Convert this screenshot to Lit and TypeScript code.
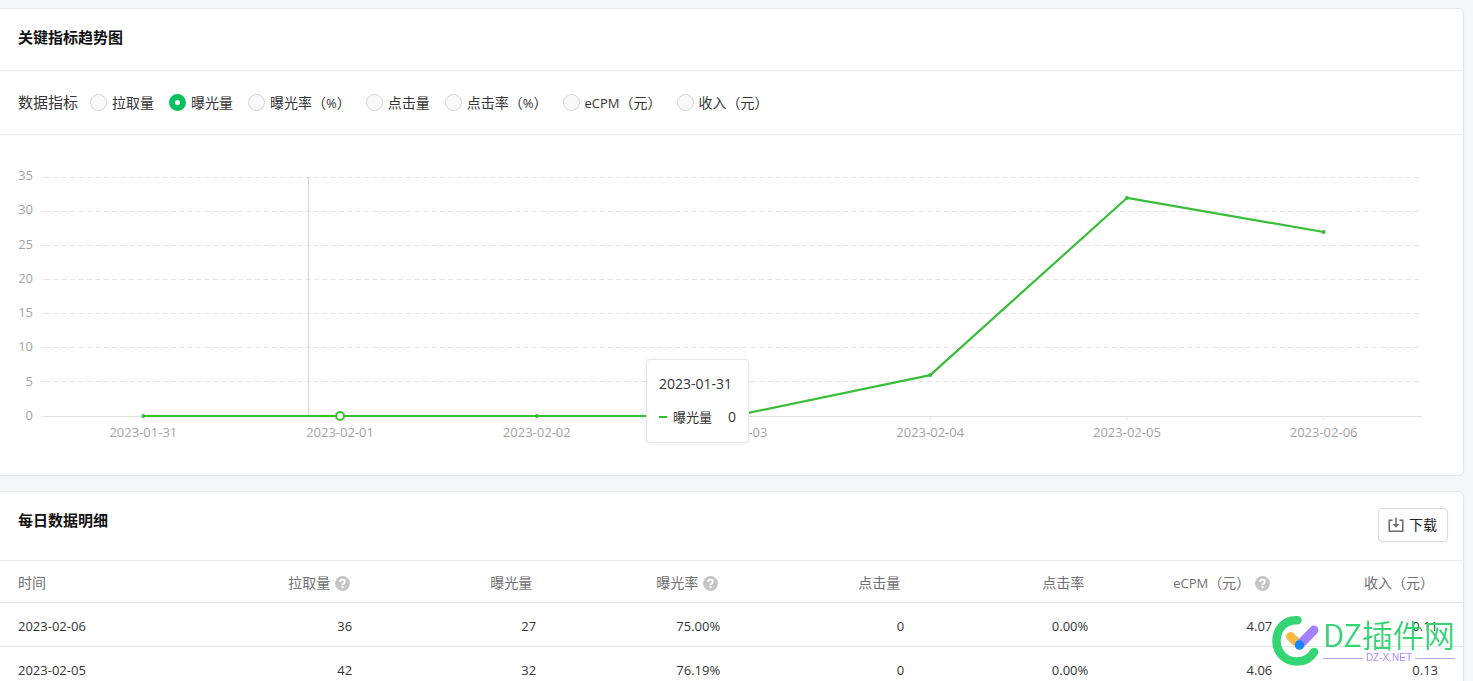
import { LitElement, html, svg, css } from "lit";
import { customElement, property, state } from "lit/decorators.js";
import { styleMap } from "lit/directives/style-map.js";

interface Metric {
  id: string;
  name: string;
  unit?: string;
}

interface Column {
  title: string;
  unit?: string;
  help?: boolean;
  width: string;
}

const METRICS: Metric[] = [
  { id: "pull", name: "拉取量" },
  { id: "exposure", name: "曝光量" },
  { id: "exposure-rate", name: "曝光率", unit: "%" },
  { id: "click", name: "点击量" },
  { id: "click-rate", name: "点击率", unit: "%" },
  { id: "ecpm", name: "eCPM", unit: "元" },
  { id: "income", name: "收入", unit: "元" },
];

const COLUMNS: Column[] = [
  { title: "时间", width: "13.2%" },
  { title: "拉取量", help: true, width: "12.58%" },
  { title: "曝光量", width: "12.58%" },
  { title: "曝光率", help: true, width: "12.58%" },
  { title: "点击量", width: "12.58%" },
  { title: "点击率", width: "12.58%" },
  { title: "eCPM", unit: "元", help: true, width: "12.58%" },
  { title: "收入", unit: "元", width: "11.32%" },
];

const ROWS: string[][] = [
  ["2023-02-06", "36", "27", "75.00%", "0", "0.00%", "4.07", "0.11"],
  ["2023-02-05", "42", "32", "76.19%", "0", "0.00%", "4.06", "0.13"],
];

const POINTS = [
  { date: "2023-01-31", value: 0 },
  { date: "2023-02-01", value: 0 },
  { date: "2023-02-02", value: 0 },
  { date: "2023-02-03", value: 0 },
  { date: "2023-02-04", value: 6 },
  { date: "2023-02-05", value: 32 },
  { date: "2023-02-06", value: 27 },
];

// Latin runs are set one size smaller than the Chinese text around them.
const run = (text: string) =>
  /^[\x20-\x7e]+$/.test(text) ? html`<span class="latin">${text}</span>` : text;

const label = (name: string, unit?: string) =>
  unit ? html`${run(name)}（${run(unit)}）` : run(name);

@customElement("trend-chart")
export class TrendChart extends LitElement {
  @property({ attribute: false }) points = POINTS;
  @property({ type: Number }) active = 1;

  static styles = css`
    :host {
      display: grid;
      grid-template-columns: 15px 1fr;
      column-gap: 12px;
      color: #a4a4a4;
      font-size: 13px;
      line-height: 20px;
    }
    .scale {
      display: flex;
      flex-direction: column;
      justify-content: space-between;
      height: 260px;
      text-align: right;
    }
    .plot {
      position: relative;
    }
    .canvas {
      display: block;
      width: 100%;
      height: 257px;
      overflow: visible;
    }
    .grid {
      stroke: #e4e4e4;
      stroke-dasharray: 5 3.4;
    }
    .stub {
      stroke: #ebebeb;
    }
    .axis {
      stroke: #e0e0e0;
    }
    .pointer {
      stroke: #d4d4d4;
      shape-rendering: crispEdges;
    }
    .series {
      stroke: #38be38;
      stroke-width: 2.2;
      stroke-linecap: round;
    }
    .dot {
      fill: #38be38;
    }
    .ring {
      fill: #fff;
      stroke: #38be38;
      stroke-width: 2;
    }
    .dates {
      display: grid;
      grid-template-columns: repeat(7, 1fr);
      text-align: center;
    }
    .tip {
      position: absolute;
      left: 43.65%;
      top: 194px;
      box-sizing: border-box;
      width: 103px;
      padding: 12px 12px 13px;
      border: 1px solid #e6e7e8;
      border-radius: 4px;
      background: #fff;
      box-shadow: 0 1px 4px rgba(0, 0, 0, 0.08);
      color: #353535;
      font-size: 14px;
      line-height: 24px;
    }
    .tip-row {
      display: flex;
      align-items: center;
      gap: 6px;
      margin-top: 9px;
      font-size: 13px;
    }
    .tip-key {
      width: 8px;
      height: 2px;
      background: #2fc02f;
    }
    .tip-value {
      margin-left: auto;
      font-size: 14px;
    }
  `;

  private x(i: number) {
    return `${((i + 0.5) / this.points.length) * 100}%`;
  }

  private y(v: number) {
    return 251 - (v / 35) * 238.5;
  }

  render() {
    const ticks = [35, 30, 25, 20, 15, 10, 5, 0];
    return html`
      <div class="scale">${ticks.map((t) => html`<span>${t}</span>`)}</div>
      <div class="plot">
        <svg class="canvas" role="img" aria-label="曝光量">
          ${ticks.map((t) => {
            const y = Math.round(this.y(t) - 0.5) + 0.5;
            return svg`
              <line class="stub" x1="-4" x2="2" y1=${y} y2=${y}></line>
              <line class=${t ? "grid" : "axis"} x1="0" x2="100%" y1=${y} y2=${y}></line>`;
          })}
          ${this.points.map(
            (_, i) => svg`<line class="stub" x1=${this.x(i)} x2=${this.x(i)} y1="252" y2="256"></line>`
          )}
          <line class="pointer" x1="19.14%" x2="19.14%" y1="12" y2="251"></line>
          ${this.points.slice(1).map(
            (p, i) => svg`<line class="series"
              x1=${this.x(i)} y1=${this.y(this.points[i].value)}
              x2=${this.x(i + 1)} y2=${this.y(p.value)}></line>`
          )}
          ${this.points.map((p, i) =>
            i === this.active
              ? svg`<circle class="ring" cx=${this.x(i)} cy=${this.y(p.value)} r="4"></circle>`
              : svg`<circle class="dot" cx=${this.x(i)} cy=${this.y(p.value)} r="2"></circle>`
          )}
        </svg>
        <div class="dates">${this.points.map((p) => html`<span>${p.date}</span>`)}</div>
        <div class="tip">
          <div>2023-01-31</div>
          <div class="tip-row">
            <span class="tip-key"></span><span>曝光量</span><span class="tip-value">0</span>
          </div>
        </div>
      </div>
    `;
  }
}

@customElement("app-root")
export class AppRoot extends LitElement {
  @state() private metric = "exposure";

  static styles = css`
    :host {
      display: block;
      box-sizing: border-box;
      height: 100vh;
      overflow: auto;
      scrollbar-width: none;
      padding: 8px 9px 0 0;
      background: #f6f7f9;
      color: #353535;
      font-family: "Open Sans", "Noto Sans CJK SC", sans-serif;
      font-size: 14px;
      line-height: 20px;
    }
    .card {
      margin-bottom: 15px;
      border: 1px solid #e4e6e9;
      border-left: 0;
      border-radius: 0 6px 6px 0;
      background: #fff;
      box-shadow: 0 1px 3px rgba(0, 0, 0, 0.04);
    }
    .head {
      display: flex;
      justify-content: space-between;
      align-items: flex-start;
      padding: 16px 15px 21px 18px;
      border-bottom: 1px solid #ebebeb;
    }
    .title {
      margin: 0;
      color: #111;
      font-size: 15px;
      font-weight: 700;
      line-height: 24px;
    }
    .latin {
      font-size: 13px;
      line-height: 1;
    }
    .metrics {
      display: flex;
      flex-wrap: wrap;
      align-items: center;
      gap: 15px;
      margin: 0;
      padding: 21px 18px;
      border: 0;
      border-bottom: 1px solid #ebebeb;
      line-height: 21px;
    }
    .metrics-name {
      margin-right: -3px;
      font-size: 15px;
    }
    .option {
      display: flex;
      align-items: center;
      gap: 5px;
    }
    .radio {
      appearance: none;
      box-sizing: border-box;
      width: 17px;
      height: 17px;
      margin: 0;
      border: 1px solid #d4d4d4;
      border-radius: 50%;
      background: #f9f9f9;
    }
    .radio:checked {
      border: 6px solid #07c160;
      background: #fff;
    }
    .chart {
      padding: 30px 41px 33px 18px;
    }
    .download {
      display: flex;
      align-items: center;
      gap: 5px;
      height: 34px;
      padding: 0 10px 0 9px;
      border: 1px solid #dcdcdc;
      border-radius: 4px;
      background: #fff;
      color: #222;
      font: inherit;
      box-shadow: 0 1px 2px rgba(0, 0, 0, 0.04);
    }
    .head-tall {
      padding-bottom: 18px;
    }
    .table {
      width: 100%;
      table-layout: fixed;
      border-collapse: collapse;
    }
    .cell {
      height: 41px;
      padding: 2px 25px 0 0;
      border-bottom: 1px solid #e6e6e6;
      font-size: 13px;
      text-align: right;
      font-weight: 400;
    }
    .cell:first-child {
      padding-left: 18px;
      padding-right: 0;
      text-align: left;
    }
    .th {
      height: 39px;
      color: #707070;
      font-size: 14px;
    }
    .th-in {
      display: inline-flex;
      align-items: center;
      gap: 5px;
      margin-right: 4px;
      vertical-align: middle;
    }
    .th-help {
      margin-right: 2px;
    }
    .brand {
      position: fixed;
      right: 18px;
      bottom: 14px;
      display: flex;
      align-items: flex-start;
      gap: 3px;
    }
    .brand-text {
      display: flex;
      flex-direction: column;
      color: #34d673;
    }
    .brand-name {
      font-family: "Noto Sans CJK SC", sans-serif;
      font-size: 31px;
      font-weight: 350;
      line-height: 38px;
      white-space: nowrap;
    }
    .brand-site {
      display: flex;
      align-items: center;
      gap: 3px;
      color: #a78bfa;
      font-family: "Liberation Sans", sans-serif;
      font-size: 10px;
      line-height: 10px;
    }
    .rule {
      flex: 1;
      height: 1px;
      background: #b9a5f8;
    }
  `;

  private help() {
    return html`<svg width="15" height="15" viewBox="0 0 15 15" aria-hidden="true">
      <circle cx="7.5" cy="7.5" r="7.5" fill="#c6c6c6"></circle>
      <path d="M5.1 6C5.1 4.400 6.100 3.700 7.500 3.700s2.400.7 2.400 1.900c0 1.500-2.300 1.700-2.300 3.400" fill="none" stroke="#fff" stroke-width="1.800"></path>
      <circle cx="7.600" cy="11.200" r="1.100" fill="#fff"></circle>
    </svg>`;
  }

  render() {
    return html`
      <section class="card">
        <div class="head"><h2 class="title">关键指标趋势图</h2></div>
        <div class="metrics" role="radiogroup" aria-labelledby="metrics-name">
          <span class="metrics-name" id="metrics-name">数据指标</span>
          ${METRICS.map(
            (m) => html`<label class="option" for=${m.id}>
              <input class="radio" type="radio" name="metric" id=${m.id}
                .checked=${this.metric === m.id}
                @change=${() => (this.metric = m.id)} />
              <span>${label(m.name, m.unit)}</span>
            </label>`
          )}
        </div>
        <div class="chart"><trend-chart></trend-chart></div>
      </section>

      <section class="card">
        <div class="head head-tall">
          <h2 class="title">每日数据明细</h2>
          <button class="download" type="button">
            <svg width="16" height="16" viewBox="0 0 16 16" fill="none" stroke="#6b6b6b" stroke-width="1.5" aria-hidden="true">
              <path d="M4.600 3.200H1.200v11h13.600v-11h-3.400"></path>
              <path d="M8 .6v7.200"></path>
              <path d="M4.600 7h6.800L8 10.800z" fill="#6b6b6b" stroke="none"></path>
            </svg>
            <span>下载</span>
          </button>
        </div>
        <table class="table">
          <colgroup>
            ${COLUMNS.map((c) => html`<col style=${styleMap({ width: c.width })} />`)}
          </colgroup>
          <thead>
            <tr>
              ${COLUMNS.map(
                (c) => html`<th class="cell th" scope="col">
                  <span class=${c.help ? "th-in th-help" : "th-in"}><span>${label(c.title, c.unit)}</span>${c.help ? this.help() : ""}</span>
                </th>`
              )}
            </tr>
          </thead>
          <tbody>
            ${ROWS.map((r) => html`<tr>${r.map((v) => html`<td class="cell">${v}</td>`)}</tr>`)}
          </tbody>
        </table>
      </section>

      <div class="brand">
        <svg width="48" height="52" viewBox="0 0 48 52" fill="none" stroke-linecap="round" aria-hidden="true">
          <path d="M25.500 5.200C12 4.500 4.500 15 4.500 26c0 12 9 20.500 20.500 20.500 8 0 13.500-3.500 17-9.500" stroke="#34d673" stroke-width="8.500"></path>
          <path d="M18.500 21.500l9 8.500" stroke="#ffb940" stroke-width="9"></path>
          <path d="M42 15L27.500 30" stroke="#a580ff" stroke-width="9"></path>
          <circle cx="27.500" cy="30" r="4.700" fill="#1687ff"></circle>
        </svg>
        <div class="brand-text">
          <span class="brand-name">DZ插件网</span>
          <span class="brand-site"><span class="rule"></span>DZ-X.NET<span class="rule"></span></span>
        </div>
      </div>
    `;
  }
}
